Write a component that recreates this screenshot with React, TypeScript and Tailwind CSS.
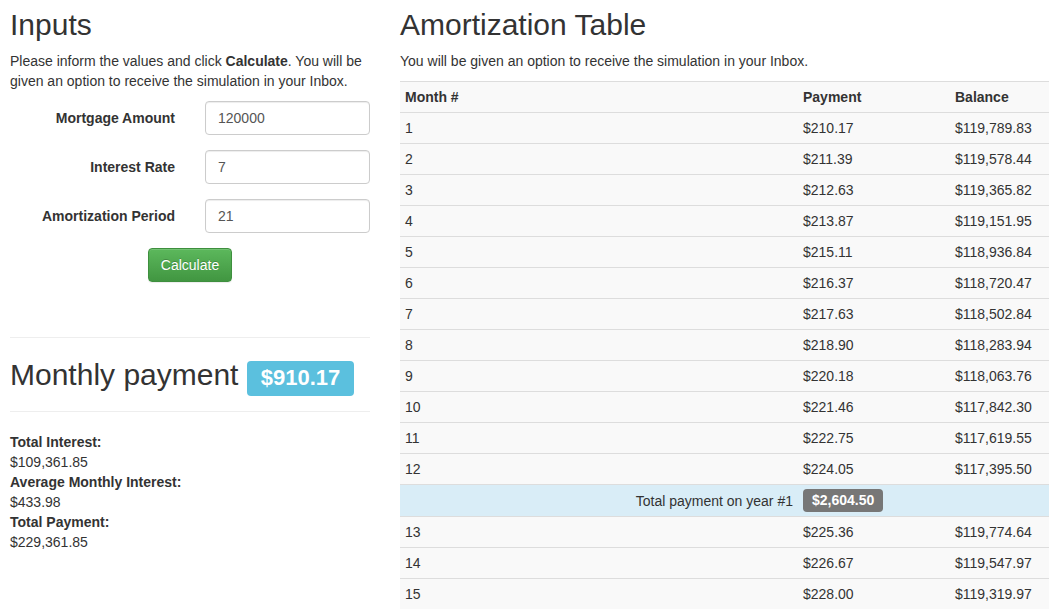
const rows: [string, string, string][] = [
  ['1', '$210.17', '$119,789.83'],
  ['2', '$211.39', '$119,578.44'],
  ['3', '$212.63', '$119,365.82'],
  ['4', '$213.87', '$119,151.95'],
  ['5', '$215.11', '$118,936.84'],
  ['6', '$216.37', '$118,720.47'],
  ['7', '$217.63', '$118,502.84'],
  ['8', '$218.90', '$118,283.94'],
  ['9', '$220.18', '$118,063.76'],
  ['10', '$221.46', '$117,842.30'],
  ['11', '$222.75', '$117,619.55'],
  ['12', '$224.05', '$117,395.50'],
];

const rows2: [string, string, string][] = [
  ['13', '$225.36', '$119,774.64'],
  ['14', '$226.67', '$119,547.97'],
  ['15', '$228.00', '$119,319.97'],
];

const fields = [
  { label: 'Mortgage Amount', value: '120000' },
  { label: 'Interest Rate', value: '7' },
  { label: 'Amortization Period', value: '21' },
];

function Row({ r }: { r: [string, string, string] }) {
  return (
    <tr className="bg-[#f9f9f9]">
      <td className="border-t border-[#ddd] px-[5px] py-[5px]">{r[0]}</td>
      <td className="border-t border-[#ddd] px-[5px] py-[5px]">{r[1]}</td>
      <td className="border-t border-[#ddd] px-[5px] py-[5px]">{r[2]}</td>
    </tr>
  );
}

export default function App() {
  return (
    <div
      className="flex pl-[10px] text-[14px] leading-[20px] text-[#333] bg-white min-h-screen"
      style={{ fontFamily: '"Liberation Sans", Arial, Helvetica, sans-serif' }}
    >
      {/* left column */}
      <div className="w-[360px] shrink-0">
        <h2 className="mt-[8px] text-[30px] leading-[33px] font-normal">Inputs</h2>
        <p className="mt-[10px]">
          Please inform the values and click <b>Calculate</b>. You will be given an option to receive the
          simulation in your Inbox.
        </p>

        <div className="mt-[10px] flex flex-col gap-[15px]">
          {fields.map((f) => (
            <div key={f.label} className="flex items-center">
              <label className="w-[180px] pr-[15px] text-right font-bold">{f.label}</label>
              <div className="flex-1 pl-[15px]">
                <input
                  defaultValue={f.value}
                  className="w-full h-[34px] px-[12px] py-[6px] rounded-[4px] border border-[#ccc] text-[#555] shadow-[inset_0_1px_1px_rgba(0,0,0,0.075)] outline-none"
                />
              </div>
            </div>
          ))}
        </div>

        <div className="mt-[15px] flex justify-center">
          <button className="h-[34px] px-[12px] rounded-[4px] border border-[#3e8f3e] text-white bg-gradient-to-b from-[#5cb85c] to-[#419641] [text-shadow:0_-1px_0_rgba(0,0,0,0.2)] shadow-[inset_0_1px_0_rgba(255,255,255,0.15),0_1px_1px_rgba(0,0,0,0.075)]">
            Calculate
          </button>
        </div>

        <hr className="mt-[55px] border-t border-[#eee]" />

        <h1 className="mt-[20px] h-[33px] text-[30px] leading-[33px] font-normal whitespace-nowrap">
          Monthly payment{' '}
          <span className="inline-block align-baseline rounded-[4px] bg-[#5bc0de] text-white font-bold text-[22px] leading-[22px] px-[14px] pt-[6px] pb-[7px]">
            $910.17
          </span>
        </h1>

        <hr className="mt-[20px] border-t border-[#eee]" />

        <dl className="mt-[20px]">
          <dt className="font-bold">Total Interest:</dt>
          <dd>$109,361.85</dd>
          <dt className="font-bold">Average Monthly Interest:</dt>
          <dd>$433.98</dd>
          <dt className="font-bold">Total Payment:</dt>
          <dd>$229,361.85</dd>
        </dl>
      </div>

      {/* right column */}
      <div className="ml-[30px] flex-1 min-w-0">
        <h2 className="mt-[8px] text-[30px] leading-[33px] font-normal">Amortization Table</h2>
        <p className="mt-[10px]">You will be given an option to receive the simulation in your Inbox.</p>

        <table className="mt-[10px] w-full table-fixed border-collapse text-left">
          <colgroup>
            <col className="w-[398px]" />
            <col className="w-[152px]" />
            <col />
          </colgroup>
          <thead>
            <tr className="bg-[#f9f9f9]">
              <th className="border-t border-[#ddd] px-[5px] py-[5px] font-bold">Month #</th>
              <th className="border-t border-[#ddd] px-[5px] py-[5px] font-bold">Payment</th>
              <th className="border-t border-[#ddd] px-[5px] py-[5px] font-bold">Balance</th>
            </tr>
          </thead>
          <tbody>
            {rows.map((r) => (
              <Row key={r[0]} r={r} />
            ))}
            <tr className="bg-[#d9edf7]">
              <td className="border-t border-[#ddd] px-[5px] py-[5px] text-right">Total payment on year #1</td>
              <td className="border-t border-[#ddd] px-[5px] py-[4px]">
                <span className="inline-block rounded-[4px] bg-[#777] text-white font-bold text-[14px] leading-[14px] px-[9px] pt-[4px] pb-[5px]">
                  $2,604.50
                </span>
              </td>
              <td className="border-t border-[#ddd] px-[5px] py-[5px]"></td>
            </tr>
            {rows2.map((r) => (
              <Row key={r[0]} r={r} />
            ))}
          </tbody>
        </table>
      </div>
    </div>
  );
}
